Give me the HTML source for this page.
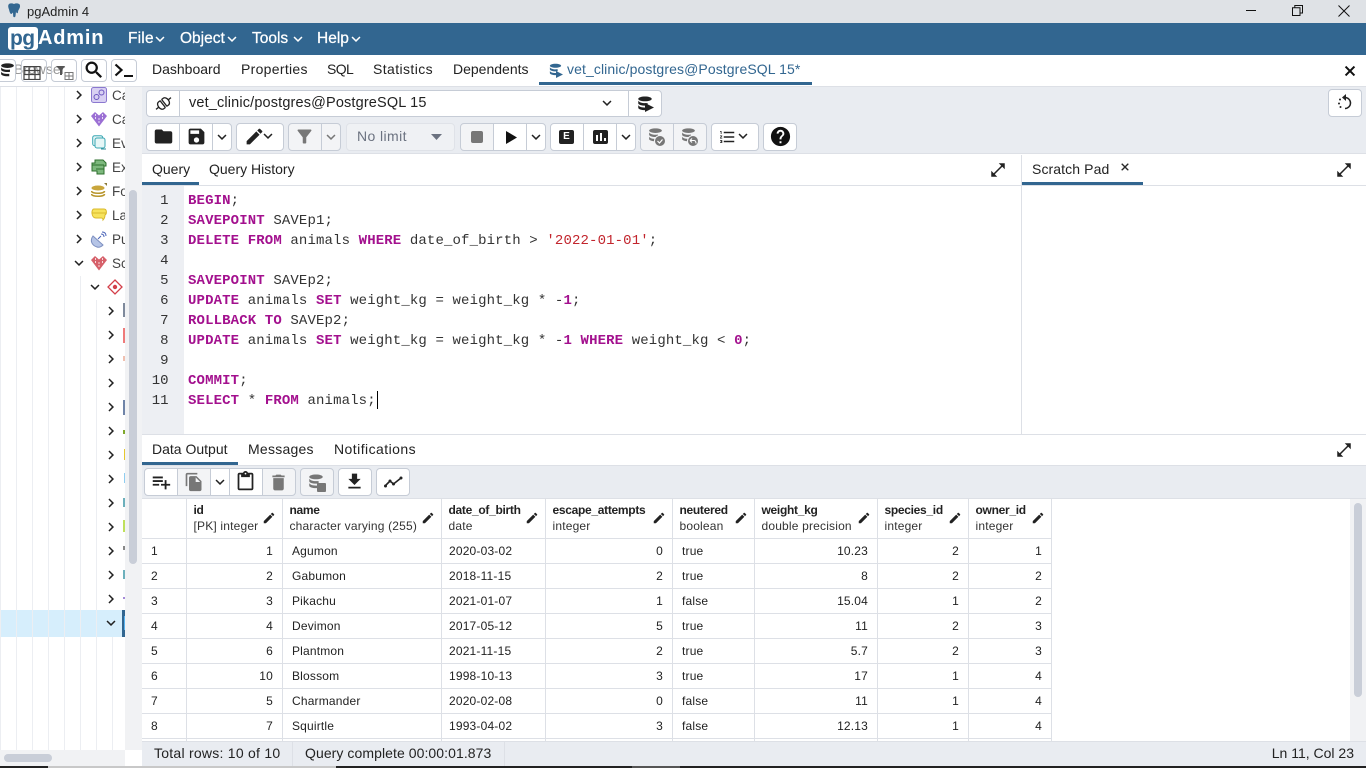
<!DOCTYPE html>
<html><head><meta charset="utf-8"><title>pgAdmin 4</title>
<style>
*{box-sizing:border-box}
html,body{margin:0;padding:0;width:1366px;height:768px;overflow:hidden;background:#fff;font-family:"Liberation Sans",sans-serif;font-size:14px;color:#222}
.a,.b,.t,svg.i{position:absolute}
.t{white-space:nowrap;line-height:16px}
.b{border:1px solid #c6ccd6;background:#fff;height:28px;top:123px}
.d{background:#f3f4f6}
.l{border-radius:4px 0 0 4px}.r{border-radius:0 4px 4px 0}.o{border-radius:4px}
.m{left:0;width:1px}
svg.i{fill:#222}
.mn{font-size:15.5px;color:#fff;-webkit-text-stroke:.25px #fff;top:31px}
.tr{left:112px;width:13px;overflow:hidden;color:#444;font-size:13.5px}
.code{position:absolute;left:188px;top:191px;font:14px/20px "Liberation Mono",monospace;letter-spacing:.13px;color:#333;white-space:pre}
.code b{color:#a3108e}
.ln{position:absolute;left:142px;width:26.5px;top:191px;text-align:right;font:14px/20px "Liberation Mono",monospace;color:#333;white-space:pre}
table{position:absolute;left:142px;top:499px;border-collapse:separate;border-spacing:0;table-layout:fixed;width:910px;font-size:12px;letter-spacing:.18px;color:#222}
td,th{border-right:1px solid #dde0e6;border-bottom:1px solid #dde0e6;padding:0 9px 0 8px;height:25px;white-space:nowrap;overflow:hidden;font-weight:normal;text-align:left}
td:first-child,td:nth-child(3),td:nth-child(6){padding-left:9px}
td:nth-child(4){padding-left:7px}
th{height:40px;padding:0 7px 1px 6.5px;position:relative;line-height:16px;vertical-align:middle}
th b{display:block;font-weight:bold;color:#222;letter-spacing:-.3px}
th span{display:block;color:#333}
th svg{position:absolute;right:6px;top:12px;width:14px;height:14px;fill:#222}
td.n{text-align:right}
</style></head><body>
<svg width="0" height="0" style="position:absolute">
<defs>
<symbol id="ch" viewBox="0 0 24 24"><path d="M16.59 8.59 12 13.17 7.41 8.59 6 10l6 6 6-6z"/></symbol>
<symbol id="cr" viewBox="0 0 24 24"><path d="M8.59 16.59 13.17 12 8.59 7.41 10 6l6 6-6 6z"/></symbol>
<symbol id="pen" viewBox="0 0 24 24"><path d="M3 17.25V21h3.75L17.81 9.94l-3.75-3.75L3 17.25zM20.71 7.04c.39-.39.39-1.02 0-1.41l-2.34-2.34a.9959.9959 0 0 0-1.41 0l-1.83 1.83 3.75 3.75 1.83-1.83z"/></symbol>
<symbol id="full" viewBox="0 0 24 24"><path d="M21 11V3h-8l3.29 3.29-10 10L3 13v8h8l-3.29-3.29 10-10z"/></symbol>
<symbol id="db" viewBox="0 0 24 24"><path d="M12 2C7 2 3 3.4 3 5.2S7 8.4 12 8.4s9-1.4 9-3.2S17 2 12 2zM3 7.5V11c0 1.8 4 3.2 9 3.2 1.2 0 2.4-.1 3.5-.2V10.8l-1 0c-.8.1-1.6.1-2.5.1-4.400 0-8-1.300-9-3.400zm0 6v3.500c0 1.800 4 3.200 9 3.200.9 0 1.800 0 2.500-.1V16.700c-.8.1-1.600.1-2.500.1-4.400 0-8-1.200-9-3.300z"/></symbol>
</defs></svg>

<!-- title bar -->
<div class="a" style="left:0;top:0;width:1366px;height:23px;background:#dfe2e6"></div>
<svg class="i" style="left:6px;top:3px;width:16px;height:16px;fill:#336791" viewBox="0 0 16 16"><path d="M3 1c2-1 3.5-.5 5 0 1.5-.8 4-1 5.500.3 1 1.500.5 3.500-.5 5-.6 1-1 1.700-1 3 0 1-1 1.200-1.600.5L10 8.500 9.500 13c-.2 1.500-2 1.600-2.300.2L7 9.500 5.500 11C4 11 3.500 8.500 3 6.500 2.500 5 1.500 2.500 3 1z"/></svg>
<div class="t" style="left:27px;top:4px;font-size:13px;color:#222">pgAdmin 4</div>
<div class="a" style="left:1246px;top:10px;width:10px;height:1px;background:#111"></div>
<svg class="i" style="left:1292px;top:5px;width:11px;height:11px" viewBox="0 0 11 11"><path d="M.5 2.800h7.500v7.700H.5zM2.800 2.800V.5h7.700v7.500H8" fill="none" stroke="#111"/></svg>
<svg class="i" style="left:1338px;top:5px;width:12px;height:12px" viewBox="0 0 12 12"><path d="M.5.500l11 11M11.500.500l-11 11" fill="none" stroke="#111"/></svg>

<!-- nav -->
<div class="a" style="left:0;top:23px;width:1366px;height:32px;background:#326690"></div>
<div class="a" style="left:8px;top:27px;width:30px;height:23px;background:#fff;border-radius:3px"></div>
<div class="t" style="left:10px;top:28px;font-size:21px;line-height:22px;font-weight:bold;color:#326690;letter-spacing:-.6px">pg</div>
<div class="t" style="left:38px;top:27px;font-size:20px;line-height:22px;font-weight:bold;color:#fff;letter-spacing:.8px">Admin</div>
<div class="t mn" style="left:128px;letter-spacing:.2px">File</div>
<svg class="i" style="left:151px;top:30px;width:18px;height:18px;fill:#fff"><use href="#ch"/></svg>
<div class="t mn" style="left:180px">Object</div>
<svg class="i" style="left:223px;top:30px;width:18px;height:18px;fill:#fff"><use href="#ch"/></svg>
<div class="t mn" style="left:252px">Tools</div>
<svg class="i" style="left:289px;top:30px;width:18px;height:18px;fill:#fff"><use href="#ch"/></svg>
<div class="t mn" style="left:317px">Help</div>
<svg class="i" style="left:347px;top:30px;width:18px;height:18px;fill:#fff"><use href="#ch"/></svg>

<!-- sidebar -->
<div class="a" style="left:0;top:55px;width:142px;height:32px;background:#fff;border-bottom:1px solid #dde0e6"></div>
<div class="t" style="left:14px;top:61px;color:#999">Browser</div>
<div class="a" style="left:-10px;top:59px;width:26px;height:23px;border:1px solid #c6ccd6;border-radius:4px;background:#fff"></div>
<svg class="i" style="left:-1px;top:62px;width:17px;height:17px"><use href="#db"/></svg>
<div class="a" style="left:21px;top:59px;width:26px;height:23px;border:1px solid #c6ccd6;border-radius:4px"></div>
<svg class="i" style="left:23px;top:66px;width:18px;height:14px" viewBox="0 0 18 14"><path d="M1 .5h16v13H1zM1 4.500h16M1 8.500h16M6 .5v13M12 .5v13" fill="none" stroke="#444" stroke-width="1.200"/></svg>
<div class="a" style="left:51px;top:59px;width:26px;height:23px;border:1px solid #c6ccd6;border-radius:4px"></div>
<svg class="i" style="left:56px;top:66px;width:18px;height:14px" viewBox="0 0 18 14"><path d="M0 0h9L6 4v5H4V4z" fill="#555"/><path d="M9 6.500h8v7H9zM9 10h8M13 6.500v7" fill="none" stroke="#777"/></svg>
<div class="a" style="left:81px;top:59px;width:26px;height:23px;border:1px solid #c6ccd6;border-radius:4px;background:#fff"></div>
<svg class="i" style="left:83px;top:59px;width:22px;height:22px;fill:#111" viewBox="0 0 24 24"><path stroke="#111" stroke-width=".5" d="M15.500 14h-.79l-.28-.27C15.410 12.590 16 11.110 16 9.500 16 5.910 13.090 3 9.500 3S3 5.910 3 9.500 5.910 16 9.500 16c1.610 0 3.090-.59 4.230-1.570l.27.28v.79l5 4.990L20.490 19l-4.990-5zm-6 0C7.010 14 5 11.990 5 9.500S7.010 5 9.500 5 14 7.010 14 9.500 11.990 14 9.500 14z"/></svg>
<div class="a" style="left:111px;top:59px;width:26px;height:23px;border:1px solid #c6ccd6;border-radius:4px;background:#fff"></div>
<svg class="i" style="left:114px;top:63px;width:21px;height:15px" viewBox="0 0 21 15"><path d="M1.500 1.500L7.500 7l-6 5.500" fill="none" stroke="#111" stroke-width="2.200"/><path d="M10 12h9v2h-9z" fill="#111"/></svg>

<div class="a" style="left:0;top:87px;width:125px;height:663px;background:#fff"></div>
<div class="a" style="left:0;top:610px;width:125px;height:27px;background:#d6eefc"></div>
<div class="a" style="left:122px;top:610px;width:3px;height:27px;background:#326690"></div>
<div class="a" style="left:124px;top:616px;width:1px;height:14px;background:#58b4f0"></div>
<div class="a m" style="left:0;top:87px;height:663px;background:#eceef2"></div>
<div class="a m" style="left:16px;top:87px;height:663px;background:#eceef2"></div>
<div class="a m" style="left:32px;top:87px;height:663px;background:#eceef2"></div>
<div class="a m" style="left:48px;top:87px;height:663px;background:#eceef2"></div>
<div class="a m" style="left:64px;top:87px;height:663px;background:#eceef2"></div>
<div class="a m" style="left:80px;top:276px;height:474px;background:#eceef2"></div>
<div class="a m" style="left:96px;top:300px;height:450px;background:#eceef2"></div>
<div class="a m" style="left:112px;top:637px;height:113px;background:#eceef2"></div>

<!-- tree chevrons -->
<svg class="i" style="left:70px;top:86px;width:18px;height:18px"><use href="#cr"/></svg>
<svg class="i" style="left:70px;top:110px;width:18px;height:18px"><use href="#cr"/></svg>
<svg class="i" style="left:70px;top:134px;width:18px;height:18px"><use href="#cr"/></svg>
<svg class="i" style="left:70px;top:158px;width:18px;height:18px"><use href="#cr"/></svg>
<svg class="i" style="left:70px;top:182px;width:18px;height:18px"><use href="#cr"/></svg>
<svg class="i" style="left:70px;top:206px;width:18px;height:18px"><use href="#cr"/></svg>
<svg class="i" style="left:70px;top:230px;width:18px;height:18px"><use href="#cr"/></svg>
<svg class="i" style="left:70px;top:254px;width:18px;height:18px"><use href="#ch"/></svg>
<svg class="i" style="left:86px;top:278px;width:18px;height:18px"><use href="#ch"/></svg>
<svg class="i" style="left:102px;top:302px;width:18px;height:18px"><use href="#cr"/></svg>
<svg class="i" style="left:102px;top:326px;width:18px;height:18px"><use href="#cr"/></svg>
<svg class="i" style="left:102px;top:350px;width:18px;height:18px"><use href="#cr"/></svg>
<svg class="i" style="left:102px;top:374px;width:18px;height:18px"><use href="#cr"/></svg>
<svg class="i" style="left:102px;top:398px;width:18px;height:18px"><use href="#cr"/></svg>
<svg class="i" style="left:102px;top:422px;width:18px;height:18px"><use href="#cr"/></svg>
<svg class="i" style="left:102px;top:446px;width:18px;height:18px"><use href="#cr"/></svg>
<svg class="i" style="left:102px;top:470px;width:18px;height:18px"><use href="#cr"/></svg>
<svg class="i" style="left:102px;top:494px;width:18px;height:18px"><use href="#cr"/></svg>
<svg class="i" style="left:102px;top:518px;width:18px;height:18px"><use href="#cr"/></svg>
<svg class="i" style="left:102px;top:542px;width:18px;height:18px"><use href="#cr"/></svg>
<svg class="i" style="left:102px;top:566px;width:18px;height:18px"><use href="#cr"/></svg>
<svg class="i" style="left:102px;top:590px;width:18px;height:18px"><use href="#cr"/></svg>
<svg class="i" style="left:102px;top:614px;width:18px;height:18px"><use href="#ch"/></svg>

<!-- tree icons -->
<svg class="i" style="left:91px;top:87px;width:16px;height:16px" viewBox="0 0 16 16"><rect x=".5" y=".5" width="15" height="15" rx="2" fill="#d8d0f2" stroke="#8b78d0"/><circle cx="5.5" cy="10" r="2.5" fill="none" stroke="#6a55c0"/><circle cx="10.5" cy="5.5" r="2.5" fill="none" stroke="#6a55c0"/></svg>
<svg class="i" style="left:91px;top:111px;width:16px;height:16px" viewBox="0 0 16 16"><path d="M4 1l4 3.500L12 1l4 4-8 10.500L0 5z" fill="#9b6fd4"/><path d="M4 4h1M11 4h1M7.500 8h1M4 7h1M11 7h1M7.500 11h1" stroke="#fff" stroke-width="1.500"/></svg>
<svg class="i" style="left:92px;top:135px;width:15px;height:16px" viewBox="0 0 15 16"><rect x=".7" y=".7" width="10" height="10" rx="2" fill="#e6f6f6" stroke="#3aa7b3"/><rect x="3" y="3" width="10" height="10" rx="2" fill="#e6f6f6" stroke="#3aa7b3"/><path d="M9 14h5" stroke="#2b8a96"/></svg>
<svg class="i" style="left:91px;top:159px;width:16px;height:16px" viewBox="0 0 16 16"><path d="M4 1h8l3 3v3h-2v8H6v-3H1V4h3z" fill="#7db87d" stroke="#2d6f2d"/><path d="M1 6h12M5 10h8" stroke="#2d6f2d"/></svg>
<svg class="i" style="left:91px;top:183px;width:16px;height:16px" viewBox="0 0 16 16"><ellipse cx="7" cy="5" rx="6.500" ry="2.500" fill="#c9a63c"/><path d="M.5 8c0 3 13 3 13 0M.5 11c0 3 13 3 13 0" fill="none" stroke="#b8962e" stroke-width="1.500"/><path d="M13 0h3v3z" fill="#8a7a3a"/></svg>
<svg class="i" style="left:91px;top:207px;width:16px;height:16px" viewBox="0 0 16 16"><path d="M3 2h10c3 0 3 5 1 6 0 3-1 4-2 5 0-2-1-2-2-2H5C0 11 0 2 3 2z" fill="#f7e35c" stroke="#d9b92c"/><path d="M1 6h14" stroke="#d9b92c"/></svg>
<svg class="i" style="left:90px;top:231px;width:18px;height:18px" viewBox="0 0 18 18"><path d="M3 5c-3 4-2 9 4 11 3 1 5-1 6-2z" fill="#b5c4e6" stroke="#7d8fc0"/><path d="M8 8l3-3M11 3c2 0 3 1 3 3M12 1c3 0 4 2 4 4" fill="none" stroke="#4a64b8"/></svg>
<svg class="i" style="left:91px;top:255px;width:16px;height:16px" viewBox="0 0 16 16"><path d="M4 1l4 3.500L12 1l4 4-8 10.500L0 5z" fill="#d6606a"/><path d="M4 4h1M11 4h1M7.500 8h1M4 7h1M11 7h1M7.500 11h1" stroke="#fff" stroke-width="1.500"/></svg>
<svg class="i" style="left:107px;top:279px;width:16px;height:16px" viewBox="0 0 16 16"><path d="M8 1l7 7-7 7-7-7z" fill="#fff" stroke="#d33f49" stroke-width="1.300"/><circle cx="8" cy="8" r="2.200" fill="#d33f49"/></svg>
<div class="a" style="left:123px;top:303px;width:2px;height:14px;background:#7f8a9c"></div>
<div class="a" style="left:123px;top:328px;width:2px;height:15px;background:#ef7a7a"></div>
<div class="a" style="left:123px;top:356px;width:2px;height:5px;background:#f0c0b0"></div>
<div class="a" style="left:123px;top:400px;width:2px;height:15px;background:#6f84a8"></div>
<div class="a" style="left:123px;top:430px;width:2px;height:4px;background:#7fa82c"></div>
<div class="a" style="left:124px;top:449px;width:1px;height:11px;background:#e5c72e"></div>
<div class="a" style="left:124px;top:473px;width:1px;height:10px;background:#8fcdf0"></div>
<div class="a" style="left:123px;top:498px;width:2px;height:9px;background:#6cb0bc"></div>
<div class="a" style="left:123px;top:520px;width:2px;height:12px;background:#bfe05c"></div>
<div class="a" style="left:123px;top:546px;width:2px;height:4px;background:#888"></div>
<div class="a" style="left:123px;top:570px;width:2px;height:9px;background:#6cb0bc"></div>
<div class="a" style="left:123px;top:597px;width:2px;height:2px;background:#a58ad8"></div>
<div class="t tr" style="top:88px">Ca</div>
<div class="t tr" style="top:112px">Ca</div>
<div class="t tr" style="top:136px">Ev</div>
<div class="t tr" style="top:160px">Ex</div>
<div class="t tr" style="top:184px">Fo</div>
<div class="t tr" style="top:208px">La</div>
<div class="t tr" style="top:232px">Pu</div>
<div class="t tr" style="top:256px">Sc</div>

<!-- sidebar scrollbars -->
<div class="a" style="left:125px;top:87px;width:17px;height:663px;background:#f1f2f4"></div>
<div class="a" style="left:129px;top:190px;width:8px;height:374px;background:#c9ced8;border-radius:4px"></div>
<div class="a" style="left:0;top:750px;width:125px;height:16px;background:#f1f2f4"></div>
<div class="a" style="left:4px;top:754px;width:48px;height:8px;background:#c9ced8;border-radius:4px"></div>
<div class="a" style="left:125px;top:750px;width:17px;height:16px;background:#fff"></div>

<!-- main tabs -->
<div class="a" style="left:142px;top:55px;width:1224px;height:32px;background:#fff;border-bottom:1px solid #dde0e6"></div>
<div class="t" style="left:152px;top:61px">Dashboard</div>
<div class="t" style="left:241px;top:61px;letter-spacing:.3px">Properties</div>
<div class="t" style="left:327px;top:61px;letter-spacing:-.6px">SQL</div>
<div class="t" style="left:373px;top:61px;letter-spacing:.4px">Statistics</div>
<div class="t" style="left:453px;top:61px">Dependents</div>
<svg class="i" style="left:548px;top:62px;width:15px;height:16px;fill:#326690"><use href="#db"/></svg>
<svg class="i" style="left:556px;top:71px;width:7px;height:7px;fill:#326690" viewBox="0 0 9 9"><path d="M0 0l9 4.500L0 9z"/></svg>
<div class="t" style="left:567px;top:61px;color:#326690;letter-spacing:.1px">vet_clinic/postgres@PostgreSQL 15*</div>
<div class="a" style="left:539px;top:82px;width:273px;height:3px;background:#326690"></div>
<svg class="i" style="left:1342px;top:63px;width:16px;height:16px;fill:#111" viewBox="0 0 24 24"><path stroke="#111" d="M19 6.410 17.590 5 12 10.590 6.410 5 5 6.410 10.590 12 5 17.590 6.410 19 12 13.410 17.590 19 19 17.590 13.410 12z"/></svg>

<!-- toolbars -->
<div class="a" style="left:142px;top:87px;width:1224px;height:67px;background:#e9ecf1;border-bottom:1px solid #dde0e6"></div>
<div class="a" style="left:146px;top:90px;width:34px;height:27px;background:#fff;border:1px solid #c6ccd6;border-radius:4px 0 0 4px"></div>
<svg class="i" style="left:154px;top:94px;width:19px;height:19px" viewBox="0 0 19 19"><g transform="rotate(-38 9.500 9.500)" fill="none" stroke="#222" stroke-width="1.300"><path d="M0 9.500h3.500M15.500 9.500H19M8.500 5v9M10.500 5v9"/><path d="M8.500 5.200H6.500C4.500 5.200 3.500 7.500 3.500 9.500s1 4.300 3 4.300h2"/><path d="M10.500 5.200h2c2 0 3 2.300 3 4.300s-1 4.300-3 4.300h-2"/></g></svg>
<div class="a" style="left:179px;top:90px;width:450px;height:27px;background:#fff;border:1px solid #c6ccd6"></div>
<div class="t" style="left:189px;top:95px;color:#222;font-size:14.5px;letter-spacing:.15px">vet_clinic/postgres@PostgreSQL 15</div>
<svg class="i" style="left:598px;top:94px;width:18px;height:18px"><use href="#ch"/></svg>
<div class="a" style="left:628px;top:90px;width:34px;height:27px;background:#fff;border:1px solid #c6ccd6;border-radius:0 4px 4px 0"></div>
<svg class="i" style="left:636px;top:95px;width:18px;height:18px"><use href="#db"/></svg>
<svg class="i" style="left:645px;top:103px;width:9px;height:9px" viewBox="0 0 9 9"><path d="M0 0l9 4.500L0 9z"/></svg>
<div class="a" style="left:1328px;top:89px;width:34px;height:28px;background:#fff;border:1px solid #c6ccd6;border-radius:4px"></div>
<svg class="i" style="left:1337px;top:94px;width:16px;height:18px" viewBox="0 0 16 18"><path d="M8 3.500c3 0 5.500 2.500 5.500 5.500S11 14.500 8 14.500" fill="none" stroke="#222" stroke-width="1.500"/><path d="M9 0v7L5 3.500z"/><circle cx="3" cy="5.500" r="1"/><circle cx="2" cy="9.500" r="1"/><circle cx="3.500" cy="13" r="1"/></svg>

<div class="b l" style="left:146px;width:34px"></div>
<svg class="i" style="left:153px;top:126px;width:21px;height:21px" viewBox="0 0 24 24"><path d="M10 4H4c-1.100 0-2 .9-2 2v12c0 1.100.9 2 2 2h16c1.100 0 2-.9 2-2V8c0-1.100-.9-2-2-2h-8l-2-2z"/></svg>
<div class="b" style="left:179px;width:34px"></div>
<svg class="i" style="left:186px;top:126px;width:21px;height:21px" viewBox="0 0 24 24"><path d="M17 3H5c-1.110 0-2 .9-2 2v14c0 1.100.89 2 2 2h14c1.100 0 2-.9 2-2V7l-4-4zm-5 16c-1.660 0-3-1.340-3-3s1.340-3 3-3 3 1.340 3 3-1.340 3-3 3zm3-10H5V5h10v4z"/></svg>
<div class="b r" style="left:212px;width:20px"></div>
<svg class="i" style="left:213px;top:128px;width:18px;height:18px"><use href="#ch"/></svg>
<div class="b o" style="left:236px;width:48px"></div>
<svg class="i" style="left:244px;top:126px;width:21px;height:21px"><use href="#pen"/></svg>
<svg class="i" style="left:259px;top:127px;width:18px;height:18px"><use href="#ch"/></svg>
<div class="b l d" style="left:288px;width:34px"></div>
<svg class="i" style="left:294px;top:126px;width:21px;height:21px;fill:#777" viewBox="0 0 24 24"><path d="M4.250 5.610C6.270 8.200 10 13 10 13v6c0 .55.45 1 1 1h2c.55 0 1-.45 1-1v-6s3.720-4.800 5.740-7.390c.51-.66.04-1.610-.79-1.610H5.040c-.83 0-1.300.95-.79 1.610z"/></svg>
<div class="b r d" style="left:321px;width:20px"></div>
<svg class="i" style="left:322px;top:128px;width:18px;height:18px;fill:#777"><use href="#ch"/></svg>
<div class="b o d" style="left:346px;width:109px;background:#eff1f4;border-color:#dfe2e8"></div>
<div class="t" style="left:357px;top:128px;color:#6b7280;letter-spacing:.4px">No limit</div>
<svg class="i" style="left:431px;top:134px;width:11px;height:6px;fill:#6b7280" viewBox="0 0 11 6"><path d="M0 0h11L5.500 6z"/></svg>
<div class="b l d" style="left:460px;width:34px"></div>
<div class="a" style="left:471px;top:131px;width:12px;height:12px;border-radius:2px;background:#777"></div>
<div class="b" style="left:493px;width:34px"></div>
<svg class="i" style="left:506px;top:131px;width:11px;height:13px" viewBox="0 0 11 13"><path d="M0 0l11 6.500L0 13z" fill="#111"/></svg>
<div class="b r" style="left:526px;width:20px"></div>
<svg class="i" style="left:527px;top:128px;width:18px;height:18px"><use href="#ch"/></svg>
<div class="b l" style="left:550px;width:34px"></div>
<div class="a" style="left:559px;top:130px;width:15px;height:14px;border-radius:2px;background:#222;color:#fff;font:bold 10px/14px 'Liberation Sans',sans-serif;text-align:center">E</div>
<div class="b" style="left:583px;width:34px"></div>
<div class="a" style="left:593px;top:130px;width:15px;height:14px;border-radius:2px;background:#222"></div>
<div class="a" style="left:596px;top:135px;width:2px;height:6px;background:#fff"></div>
<div class="a" style="left:600px;top:133px;width:2px;height:8px;background:#fff"></div>
<div class="a" style="left:604px;top:138px;width:2px;height:3px;background:#fff"></div>
<div class="b r" style="left:616px;width:20px"></div>
<svg class="i" style="left:617px;top:128px;width:18px;height:18px"><use href="#ch"/></svg>
<div class="b l d" style="left:640px;width:34px"></div>
<svg class="i" style="left:647px;top:127px;width:17px;height:17px;fill:#777"><use href="#db"/></svg>
<svg class="i" style="left:654px;top:135px;width:12px;height:12px" viewBox="0 0 12 12"><circle cx="6" cy="6" r="5.500" fill="#777" stroke="#f3f4f6"/><path d="M3.500 6l2 2 3-3.500" fill="none" stroke="#fff" stroke-width="1.200"/></svg>
<div class="b r d" style="left:673px;width:34px"></div>
<svg class="i" style="left:680px;top:127px;width:17px;height:17px;fill:#777"><use href="#db"/></svg>
<svg class="i" style="left:687px;top:135px;width:12px;height:12px" viewBox="0 0 12 12"><circle cx="6" cy="6" r="5.500" fill="#777" stroke="#f3f4f6"/><path d="M3 5.500h4c1.500 0 2 1 2 3M3 5.500l2-2M3 5.500l2 2" fill="none" stroke="#fff" stroke-width="1.100"/></svg>
<div class="b o" style="left:711px;width:48px"></div>
<svg class="i" style="left:718px;top:128px;width:19px;height:18px" viewBox="0 0 24 24"><path d="M2 17h2v.5H3v1h1v.5H2v1h3v-4H2v1zm1-9h1V4H2v1h1v3zm-1 3h1.800L2 13.100v.9h3v-1H3.200L5 10.900V10H2v1zm5-6v2h14V5H7zm0 14h14v-2H7v2zm0-6h14v-2H7v2z"/></svg>
<svg class="i" style="left:734px;top:127px;width:18px;height:18px"><use href="#ch"/></svg>
<div class="b o" style="left:763px;width:34px"></div>
<svg class="i" style="left:769px;top:125px;width:23px;height:23px;fill:#111" viewBox="0 0 24 24"><path d="M12 2C6.480 2 2 6.480 2 12s4.480 10 10 10 10-4.480 10-10S17.520 2 12 2zm1 17h-2v-2h2v2zm2.070-7.750-.9.92C13.450 12.900 13 13.500 13 15h-2v-.5c0-1.100.45-2.100 1.170-2.830l1.240-1.260c.37-.36.59-.86.59-1.410 0-1.100-.9-2-2-2s-2 .9-2 2H8c0-2.210 1.790-4 4-4s4 1.790 4 4c0 .88-.36 1.680-.93 2.250z"/></svg>

<!-- query area -->
<div class="a" style="left:142px;top:185px;width:1224px;height:1px;background:#dde0e6"></div>
<div class="t" style="left:152px;top:161px">Query</div>
<div class="t" style="left:209px;top:161px">Query History</div>
<div class="a" style="left:142px;top:182px;width:57px;height:3px;background:#326690"></div>
<svg class="i" style="left:989px;top:161px;width:18px;height:18px"><use href="#full"/></svg>
<div class="a" style="left:1021px;top:155px;width:1px;height:279px;background:#dde0e6"></div>
<div class="t" style="left:1032px;top:161px;letter-spacing:.1px">Scratch Pad</div>
<svg class="i" style="left:1119px;top:161px;width:12px;height:12px" viewBox="0 0 24 24"><path stroke="#222" d="M19 6.410 17.590 5 12 10.590 6.410 5 5 6.410 10.590 12 5 17.590 6.410 19 12 13.410 17.590 19 19 17.590 13.410 12z"/></svg>
<div class="a" style="left:1022px;top:182px;width:121px;height:3px;background:#326690"></div>
<svg class="i" style="left:1335px;top:161px;width:18px;height:18px"><use href="#full"/></svg>

<div class="a" style="left:142px;top:186px;width:42px;height:248px;background:#edeff3"></div>
<div class="ln">1
2
3
4
5
6
7
8
9
10
11</div>
<div class="code"><b>BEGIN</b>;
<b>SAVEPOINT</b> SAVEp1;
<b>DELETE FROM</b> animals <b>WHERE</b> date_of_birth &gt; <span style="color:#c2252d">'2022-01-01'</span>;

<b>SAVEPOINT</b> SAVEp2;
<b>UPDATE</b> animals <b>SET</b> weight_kg = weight_kg * -<b>1</b>;
<b>ROLLBACK TO</b> SAVEp2;
<b>UPDATE</b> animals <b>SET</b> weight_kg = weight_kg * -<b>1</b> <b>WHERE</b> weight_kg &lt; <b>0</b>;

<b>COMMIT</b>;
<b>SELECT</b> * <b>FROM</b> animals;</div>
<div class="a" style="left:377px;top:391px;width:1px;height:18px;background:#000"></div>

<!-- data output -->
<div class="a" style="left:142px;top:434px;width:1224px;height:1px;background:#dde0e6"></div>
<div class="t" style="left:152px;top:441px">Data Output</div>
<div class="t" style="left:248px;top:441px;letter-spacing:.25px">Messages</div>
<div class="t" style="left:334px;top:441px;letter-spacing:.45px">Notifications</div>
<div class="a" style="left:142px;top:462px;width:96px;height:3px;background:#326690"></div>
<svg class="i" style="left:1335px;top:441px;width:18px;height:18px"><use href="#full"/></svg>
<div class="a" style="left:142px;top:465px;width:1224px;height:34px;background:#e9ecf1;border-top:1px solid #dde0e6;border-bottom:1px solid #dde0e6"></div>
<div class="b l" style="left:144px;width:34px;top:468px"></div>
<svg class="i" style="left:150px;top:471px;width:22px;height:22px" viewBox="0 0 24 24"><path d="M14 10H3v2h11v-2zm0-4H3v2h11V6zm4 8v-4h-2v4h-4v2h4v4h2v-4h4v-2h-4zM3 16h7v-2H3v2z"/></svg>
<div class="b d" style="left:177px;width:34px;top:468px"></div>
<svg class="i" style="left:184px;top:472px;width:20px;height:20px;fill:#777" viewBox="0 0 24 24"><path d="M16 1H4c-1.100 0-2 .9-2 2v14h2V3h12V1zm-1 4 6 6v10c0 1.100-.9 2-2 2H7.990C6.890 23 6 22.100 6 21l.01-14c0-1.100.89-2 1.990-2h7zm-1 7h5.500L14 6.500V12z"/></svg>
<div class="b" style="left:210px;width:20px;top:468px"></div>
<svg class="i" style="left:211px;top:473px;width:18px;height:18px"><use href="#ch"/></svg>
<div class="b" style="left:229px;width:34px;top:468px"></div>
<svg class="i" style="left:235px;top:471px;width:21px;height:21px" viewBox="0 0 24 24"><path d="M19 2h-4.180C14.400.84 13.300 0 12 0c-1.300 0-2.400.84-2.820 2H5c-1.100 0-2 .9-2 2v16c0 1.100.9 2 2 2h14c1.100 0 2-.9 2-2V4c0-1.100-.9-2-2-2zm-7 0c.55 0 1 .45 1 1s-.45 1-1 1-1-.45-1-1 .45-1 1-1zm7 18H5V4h2v3h10V4h2v16z"/></svg>
<div class="b r d" style="left:262px;width:34px;top:468px"></div>
<svg class="i" style="left:268px;top:472px;width:21px;height:21px;fill:#777" viewBox="0 0 24 24"><path d="M6 19c0 1.100.9 2 2 2h8c1.100 0 2-.9 2-2V7H6v12zM19 4h-3.500l-1-1h-5l-1 1H5v2h14V4z"/></svg>
<div class="b o d" style="left:300px;width:34px;top:468px"></div>
<svg class="i" style="left:307px;top:473px;width:18px;height:18px;fill:#777"><use href="#db"/></svg>
<div class="a" style="left:317px;top:483px;width:9px;height:9px;background:#777;border-radius:1px"></div>
<div class="b o" style="left:338px;width:34px;top:468px"></div>
<svg class="i" style="left:344px;top:471px;width:21px;height:21px" viewBox="0 0 24 24"><path d="M19 9h-4V3H9v6H5l7 7 7-7zM5 18v2h14v-2H5z"/></svg>
<div class="b o" style="left:376px;width:34px;top:468px"></div>
<svg class="i" style="left:384px;top:475px;width:19px;height:14px" viewBox="0 0 19 14"><path d="M1 11l5-5 3.500 3L17 3" fill="none" stroke="#222" stroke-width="1.600"/><circle cx="1.500" cy="11" r="1.500"/><circle cx="6" cy="6" r="1.500"/><circle cx="9.500" cy="9" r="1.500"/><circle cx="17" cy="3" r="1.500"/></svg>

<table>
<colgroup><col style="width:45px"><col style="width:96px"><col style="width:159px"><col style="width:104px"><col style="width:127px"><col style="width:82px"><col style="width:123px"><col style="width:91px"><col style="width:83px"></colgroup>
<tr><th></th>
<th><b>id</b><span>[PK] integer</span><svg><use href="#pen"/></svg></th>
<th><b>name</b><span>character varying (255)</span><svg><use href="#pen"/></svg></th>
<th><b>date_of_birth</b><span>date</span><svg><use href="#pen"/></svg></th>
<th><b>escape_attempts</b><span>integer</span><svg><use href="#pen"/></svg></th>
<th><b>neutered</b><span>boolean</span><svg><use href="#pen"/></svg></th>
<th><b>weight_kg</b><span>double precision</span><svg><use href="#pen"/></svg></th>
<th><b>species_id</b><span>integer</span><svg><use href="#pen"/></svg></th>
<th><b>owner_id</b><span>integer</span><svg><use href="#pen"/></svg></th></tr>
<tr><td>1</td><td class="n">1</td><td>Agumon</td><td>2020-03-02</td><td class="n">0</td><td>true</td><td class="n">10.23</td><td class="n">2</td><td class="n">1</td></tr>
<tr><td>2</td><td class="n">2</td><td>Gabumon</td><td>2018-11-15</td><td class="n">2</td><td>true</td><td class="n">8</td><td class="n">2</td><td class="n">2</td></tr>
<tr><td>3</td><td class="n">3</td><td>Pikachu</td><td>2021-01-07</td><td class="n">1</td><td>false</td><td class="n">15.04</td><td class="n">1</td><td class="n">2</td></tr>
<tr><td>4</td><td class="n">4</td><td>Devimon</td><td>2017-05-12</td><td class="n">5</td><td>true</td><td class="n">11</td><td class="n">2</td><td class="n">3</td></tr>
<tr><td>5</td><td class="n">6</td><td>Plantmon</td><td>2021-11-15</td><td class="n">2</td><td>true</td><td class="n">5.7</td><td class="n">2</td><td class="n">3</td></tr>
<tr><td>6</td><td class="n">10</td><td>Blossom</td><td>1998-10-13</td><td class="n">3</td><td>true</td><td class="n">17</td><td class="n">1</td><td class="n">4</td></tr>
<tr><td>7</td><td class="n">5</td><td>Charmander</td><td>2020-02-08</td><td class="n">0</td><td>false</td><td class="n">11</td><td class="n">1</td><td class="n">4</td></tr>
<tr><td>8</td><td class="n">7</td><td>Squirtle</td><td>1993-04-02</td><td class="n">3</td><td>false</td><td class="n">12.13</td><td class="n">1</td><td class="n">4</td></tr>
<tr><td></td><td></td><td></td><td></td><td></td><td></td><td></td><td></td><td></td></tr>
</table>

<div class="a" style="left:1350px;top:499px;width:16px;height:242px;background:#f1f2f4"></div>
<div class="a" style="left:1354px;top:503px;width:8px;height:194px;background:#c9ced8;border-radius:4px"></div>

<!-- status bar -->
<div class="a" style="left:142px;top:741px;width:1224px;height:25px;background:#e9ecf1;border-top:1px solid #dde0e6"></div>
<div class="t" style="left:154px;top:745px;letter-spacing:.25px">Total rows: 10 of 10</div>
<div class="a" style="left:292px;top:742px;width:1px;height:24px;background:#dde0e6"></div>
<div class="t" style="left:305px;top:745px;letter-spacing:.07px">Query complete 00:00:01.873</div>
<div class="a" style="left:504px;top:742px;width:1px;height:24px;background:#dde0e6"></div>
<div class="t" style="right:12px;top:745px">Ln 11, Col 23</div>

<!-- bottom strip -->
<div class="a" style="left:0;top:766px;width:48px;height:2px;background:#222"></div>
<div class="a" style="left:48px;top:766px;width:288px;height:2px;background:#c8c8c8"></div>
<div class="a" style="left:336px;top:766px;width:296px;height:2px;background:#222"></div>
<div class="a" style="left:632px;top:766px;width:48px;height:2px;background:#555"></div>
<div class="a" style="left:680px;top:766px;width:686px;height:2px;background:#222"></div>
</body></html>
